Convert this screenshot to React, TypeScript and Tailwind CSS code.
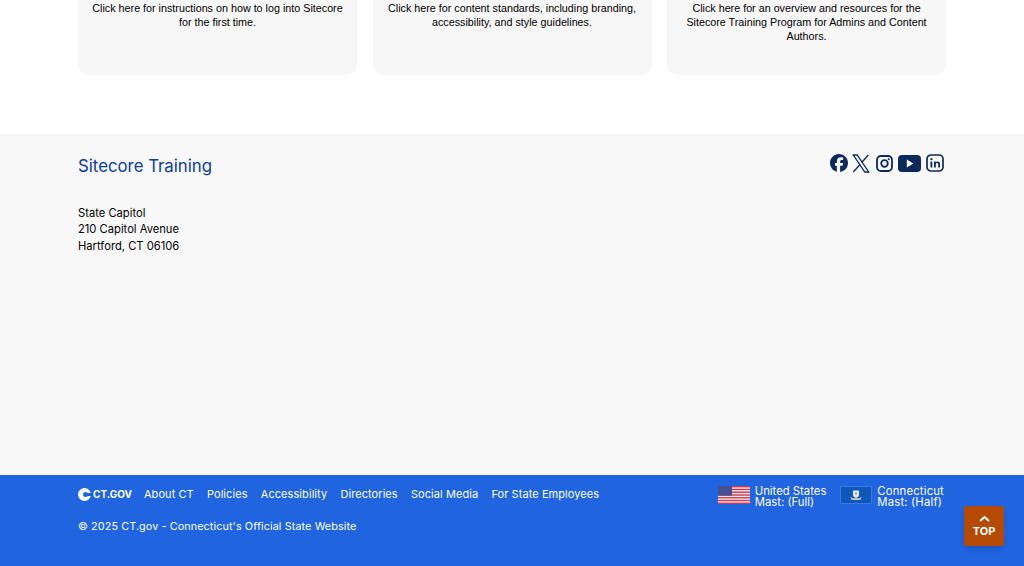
import React from "react";
import { FaFacebook } from "react-icons/fa6";

const Card = ({ lines }: { lines: string[] }) => (
  <div className="h-[75px] w-[279px] rounded-b-[10px] bg-[#f7f7f7] px-2 pt-px text-center font-['Liberation_Sans',sans-serif] text-[10.75px] leading-[14px] text-black">
    {lines.map((l) => (
      <div key={l} className="whitespace-nowrap">{l}</div>
    ))}
  </div>
);

const links = ["About CT", "Policies", "Accessibility", "Directories", "Social Media", "For State Employees"];

const UsFlag = () => (
  <svg width="32" height="18" viewBox="0 0 32 18" className="shrink-0 self-start">
    <rect width="32" height="18" fill="#f3e4ea" />
    {[0, 2, 4, 6, 8, 10, 12].map((i) => (
      <rect key={i} y={i * 1.385} width="32" height="1.385" fill="#c93c4e" />
    ))}
    <rect width="14" height="9.700" fill="#474f93" />
  </svg>
);

const CtFlag = () => (
  <svg width="32" height="18" viewBox="0 0 32 18" className="shrink-0 self-start">
    <rect width="32" height="18" fill="#3d78dc" />
    <rect x="1" y="1" width="30" height="16" fill="#0d58b8" />
    <path d="M13 4.500h6v4.500q0 2-3 3q-3-1-3-3z" fill="#e6e6dc" />
    <circle cx="16" cy="7.500" r="1" fill="#7c8f7a" />
    <path d="M10.500 11q2.500 1.800 5.500 1.200q3 .6 5.500-1.200l-.8 2.400q-4.700 1.200-9.400 0z" fill="#cfcdbb" />
  </svg>
);

export default function App() {
  return (
    <div className="flex h-[566px] flex-col overflow-hidden bg-white font-['Inter',sans-serif]">
      <section className="h-[134px] shrink-0 px-[78px]">
        <div className="flex w-[868px] justify-between">
          <Card lines={["Click here for instructions on how to log into Sitecore", "for the first time."]} />
          <Card lines={["Click here for content standards, including branding,", "accessibility, and style guidelines."]} />
          <Card lines={["Click here for an overview and resources for the", "Sitecore Training Program for Admins and Content", "Authors."]} />
        </div>
      </section>

      <section className="h-[341px] shrink-0 bg-[#f8f8f8] px-[78px]">
        <div className="flex w-[868px] justify-between">
          <h2 className="pt-[20px] text-[16.8px] leading-[24px] font-normal text-[#0a3d9c]">Sitecore Training</h2>
          <div className="flex h-[38px] items-center pt-[20px] pr-[2px] text-[#0b2a5b]">
            <FaFacebook size={18} />
            <svg width="18" height="19" viewBox="0 0 18 19" fill="none" stroke="currentColor" strokeWidth="1.300" className="ml-[4px]">
              <path d="M1.300 1h3.900l11.500 17h-3.900z" />
              <path d="M16.300 1l-6.600 7.500M8 10.500L1.300 18" />
            </svg>
            <svg width="17" height="17" viewBox="0 0 17 17" fill="none" stroke="currentColor" className="ml-[6px]">
              <rect x="1" y="1" width="15" height="15" rx="4" strokeWidth="1.800" />
              <circle cx="8.500" cy="8.500" r="3.300" strokeWidth="1.800" />
              <circle cx="12.700" cy="4.300" r="1" fill="currentColor" stroke="none" />
            </svg>
            <svg width="23" height="17" viewBox="0 0 23 17" className="ml-[5px]">
              <rect width="23" height="17" rx="4" fill="currentColor" />
              <path d="M8.800 4.500v8l6.500-4z" fill="#f8f8f8" />
            </svg>
            <svg width="18" height="18" viewBox="0 0 18 18" className="ml-[5px]" fill="none">
              <rect x="1" y="1" width="16" height="16" rx="4" stroke="currentColor" strokeWidth="1.700" />
              <rect x="4.500" y="7.500" width="1.800" height="6" fill="currentColor" />
              <circle cx="5.400" cy="5.200" r="1.100" fill="currentColor" />
              <path d="M8 13.500V7.500h1.700v.9c.9-1.500 4.300-1.500 4.300 1.300v3.800h-1.800v-3.300c0-1.700-2.400-1.600-2.400 0v3.300z" fill="currentColor" />
            </svg>
          </div>
        </div>
        <div className="mt-[27px] text-[11.2px] leading-[16.300px] text-black">
          <div>State Capitol</div>
          <div>210 Capitol Avenue</div>
          <div>Hartford, CT 06106</div>
        </div>
      </section>

      <footer className="relative flex-1 bg-[#2064e0] px-[78px] text-white">
        <div className="flex w-[868px] items-start justify-between pt-[11px]">
          <div className="flex h-[16px] items-center">
            <svg width="13" height="13" viewBox="0 0 13 13" className="mr-[2px]">
              <circle cx="6.500" cy="6.500" r="6.500" fill="#fff" />
              <circle cx="7.600" cy="6.500" r="2.500" fill="#2064e0" />
              <rect x="7.600" y="5" width="6" height="3" fill="#2064e0" />
            </svg>
            <span className="mr-[12px] text-[10px] font-bold">CT.GOV</span>
            <nav className="flex gap-[13.2px] text-[11px] tracking-[0.07px]">
              {links.map((l) => (
                <a key={l}>{l}</a>
              ))}
            </nav>
          </div>
          <div className="flex pr-[2px] text-[11.3px] leading-[10.500px]">
            <div className="flex items-center gap-[5px]">
              <UsFlag />
              <div className="whitespace-nowrap">
                United States
                <br />
                Mast: (Full)
              </div>
            </div>
            <div className="ml-[14px] flex items-center gap-[5px] tracking-[0.18px]">
              <CtFlag />
              <div className="whitespace-nowrap">
                Connecticut
                <br />
                Mast: (Half)
              </div>
            </div>
          </div>
        </div>
        <p className="mt-[12px] text-[10.8px] leading-[16px] tracking-[0.1px]">© 2025 CT.gov - Connecticut's Official State Website</p>
        <button className="absolute top-[31px] right-[20px] flex h-[40px] w-[40px] flex-col items-center justify-center rounded-[2px] bg-[#b54a05] text-[11px] leading-[11px] font-bold text-white shadow-md">
          <svg width="11" height="7" viewBox="0 0 11 7" fill="none" className="mb-[4px]">
            <path d="M1 6l4.500-4L10 6" stroke="#fff" strokeWidth="2" />
          </svg>
          TOP
        </button>
      </footer>
    </div>
  );
}
